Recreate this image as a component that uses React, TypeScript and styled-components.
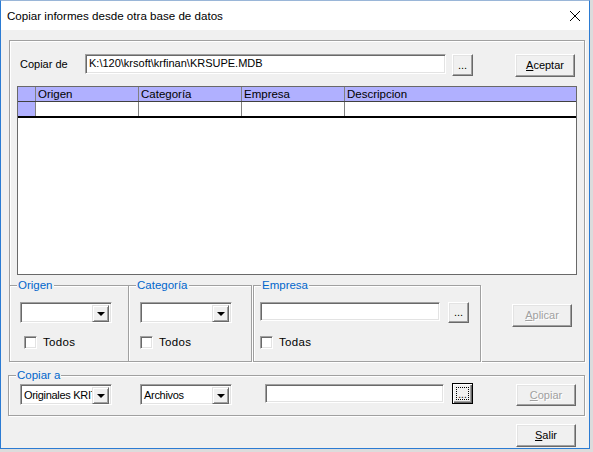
import React from "react";
import styled, { createGlobalStyle, css } from "styled-components";

const Global = createGlobalStyle`
  html, body { margin: 0; padding: 0; background: #dcdcdc; }
  body { font-family: "Liberation Sans", Arial, sans-serif; font-size: 11px; color: #000; }
  * { box-sizing: border-box; }
`;

const Window = styled.div`
  width: 590px;
  height: 449px;
  border: 1px solid #2b7bd3;
  border-top-color: #9ab6d8;
  background: #f0f0f0;
  display: flex;
  flex-direction: column;
  overflow: hidden;
`;

const TitleBar = styled.div`
  height: 29px;
  flex: none;
  background: #fff;
  display: flex;
  align-items: center;
  padding: 0 8px 0 6px;
`;

const Title = styled.div`
  flex: 1;
  font-size: 11.6px;
  color: #000;
  padding-bottom: 1px;
`;

const Client = styled.div`
  flex: 1;
  display: flex;
  flex-direction: column;
  padding: 10px 4px 0 8px;
`;

const etched = css`
  border: 1px solid #a0a0a0;
  box-shadow: inset 1px 1px 0 #fff, 1px 1px 0 #fff;
`;

const OuterFrame = styled.div`
  ${etched};
  width: 576px;
  height: 322px;
  display: flex;
  flex-direction: column;
`;

const TopRow = styled.div`
  margin-top: 13px;
  padding: 0 9px 0 10px;
  height: 23px;
  display: flex;
  align-items: flex-start;
`;

const FieldLabel = styled.div`
  width: 65px;
  line-height: 20px;
  white-space: nowrap;
`;

const sunken = css`
  border: 1px solid;
  border-color: #a0a0a0 #fff #fff #a0a0a0;
  box-shadow: inset 1px 1px 0 #696969, inset -1px -1px 0 #e3e3e3;
  background: #fff;
`;

const TextBox = styled.div<{ $w: number; $h?: number; $ml?: number }>`
  ${sunken};
  width: ${(p) => p.$w}px;
  height: ${(p) => p.$h ?? 20}px;
  margin-left: ${(p) => p.$ml ?? 0}px;
  padding: 0 3px;
  line-height: ${(p) => (p.$h ?? 20) - 3}px;
  white-space: nowrap;
  overflow: hidden;
  flex: none;
`;

const Button = styled.div<{ $w: number; $h: number; $ml?: number; $disabled?: boolean; $focused?: boolean; $mt?: number }>`
  width: ${(p) => p.$w}px;
  height: ${(p) => p.$h}px;
  margin-left: ${(p) => p.$ml ?? 0}px;
  margin-top: ${(p) => p.$mt ?? 0}px;
  flex: none;
  background: #f0f0f0;
  border: 1px solid;
  border-color: #fff #696969 #696969 #fff;
  box-shadow: inset -1px -1px 0 #a0a0a0, inset 1px 1px 0 #e3e3e3;
  display: flex;
  align-items: center;
  justify-content: center;
  font-size: 11px;
  padding-bottom: 1px;
  color: ${(p) => (p.$disabled ? "#a0a0a0" : "#000")};
  text-shadow: ${(p) => (p.$disabled ? "1px 1px 0 #fff" : "none")};
  ${(p) =>
    p.$focused &&
    css`
      border-color: #000;
      box-shadow: inset 1px 1px 0 #fff, inset -1px -1px 0 #696969, inset -2px -2px 0 #a0a0a0;
    `}
  u { text-decoration: underline; text-underline-offset: 1px; }
`;

const FocusRect = styled.span`
  width: 13px;
  height: 13px;
  border: 1px dotted #000;
  display: flex;
  align-items: flex-end;
  justify-content: center;
  font-size: 10px;
  line-height: 9px;
`;

const Spacer = styled.div`
  flex: 1;
`;

const Grid = styled.div`
  margin: 9px 0 0 7px;
  width: 560px;
  height: 189px;
  border: 1px solid #696969;
  background: #fff;
  display: flex;
  flex-direction: column;
  flex: none;
`;

const GridRow = styled.div<{ $last?: boolean }>`
  display: grid;
  grid-template-columns: 18px 103px 103px 103px 1fr;
  height: ${(p) => (p.$last ? 16 : 15)}px;
  border-bottom: ${(p) => (p.$last ? "2px solid #000" : "1px solid #404040")};
`;

const Cell = styled.div<{ $head?: boolean; $fixed?: boolean; $noRight?: boolean }>`
  background: ${(p) => (p.$head || p.$fixed ? "#b0b0ff" : "#fff")};
  border-right: ${(p) => (p.$noRight ? "none" : "1px solid #808080")};
  padding-left: 2px;
  line-height: 14px;
  font-size: 11.5px;
  white-space: nowrap;
  overflow: hidden;
`;

const FilterRow = styled.div`
  display: flex;
  margin: 10px -1px -1px -1px;
  height: 77px;
`;

const Group = styled.div<{ $w: number; $ml?: number; $pl: number; $pt: number }>`
  ${etched};
  position: relative;
  width: ${(p) => p.$w}px;
  margin-left: ${(p) => p.$ml ?? 0}px;
  padding: ${(p) => p.$pt}px 0 0 ${(p) => p.$pl}px;
  flex: none;
  display: flex;
  flex-direction: column;
`;

const GroupLabel = styled.div`
  position: absolute;
  top: -8px;
  left: 7px;
  padding: 0 1px;
  background: #f0f0f0;
  color: #0066cc;
  font-size: 11.5px;
  line-height: 14px;
`;

const Row = styled.div`
  display: flex;
  align-items: flex-start;
`;

const Combo = styled.div<{ $w: number; $ml?: number }>`
  ${sunken};
  width: ${(p) => p.$w}px;
  height: 21px;
  margin-left: ${(p) => p.$ml ?? 0}px;
  flex: none;
  display: flex;
  padding: 2px;
`;

const ComboText = styled.div`
  flex: 1;
  min-width: 0;
  overflow: hidden;
  white-space: nowrap;
  padding-left: 1px;
  line-height: 16px;
  font-size: 11px;
  letter-spacing: -0.3px;
`;

const DropButton = styled.div`
  width: 17px;
  height: 17px;
  flex: none;
  background: #f0f0f0;
  border: 1px solid;
  border-color: #e3e3e3 #696969 #696969 #e3e3e3;
  box-shadow: inset 1px 1px 0 #fff, inset -1px -1px 0 #a0a0a0;
  display: flex;
  align-items: center;
  justify-content: center;
`;

const Triangle = styled.span`
  width: 0;
  height: 0;
  border-left: 4px solid transparent;
  border-right: 4px solid transparent;
  border-top: 4px solid #000;
  margin-top: 1px;
`;

const CheckRow = styled.div<{ $mt: number; $ml: number }>`
  display: flex;
  align-items: center;
  margin-top: ${(p) => p.$mt}px;
  margin-left: ${(p) => p.$ml}px;
  height: 13px;
`;

const CheckBox = styled.div`
  width: 13px;
  height: 13px;
  flex: none;
  ${sunken};
`;

const CheckText = styled.span`
  margin-left: 6px;
  line-height: 13px;
  font-size: 11.5px;
  letter-spacing: 0.3px;
`;

const ApplyArea = styled.div`
  flex: 1;
  padding: 19px 0 0 31px;
`;

const CopyGroup = styled.div`
  ${etched};
  position: relative;
  margin: 13px 0 0 -1px;
  width: 577px;
  height: 41px;
  padding: 8px 0 0 11px;
  display: flex;
  align-items: flex-start;
  flex: none;
`;

const BottomRow = styled.div`
  display: flex;
  justify-content: flex-end;
  margin-top: 8px;
  padding-right: 9px;
`;

const CloseIcon = () => (
  <svg width="12" height="12" viewBox="0 0 12 12">
    <path d="M1 1 L11 11 M11 1 L1 11" stroke="#000" strokeWidth="1" fill="none" />
  </svg>
);

const ComboBox = ({ w, text, ml }: { w: number; text?: string; ml?: number }) => (
  <Combo $w={w} $ml={ml}>
    <ComboText>{text ?? ""}</ComboText>
    <DropButton>
      <Triangle />
    </DropButton>
  </Combo>
);

export default function App() {
  const columns = ["Origen", "Categoría", "Empresa", "Descripcion"];
  return (
    <>
      <Global />
      <Window>
        <TitleBar>
          <Title>Copiar informes desde otra base de datos</Title>
          <CloseIcon />
        </TitleBar>
        <Client>
          <OuterFrame>
            <TopRow>
              <FieldLabel>Copiar de</FieldLabel>
              <TextBox $w={361} $h={20}>K:\120\krsoft\krfinan\KRSUPE.MDB</TextBox>
              <Button $w={21} $h={22} $ml={6}>...</Button>
              <Spacer />
              <Button $w={60} $h={23}>
                <span><u>A</u>ceptar</span>
              </Button>
            </TopRow>
            <Grid>
              <GridRow>
                <Cell $fixed />
                {columns.map((c, i) => (
                  <Cell key={c} $head $noRight={i === columns.length - 1}>
                    {c}
                  </Cell>
                ))}
              </GridRow>
              <GridRow $last>
                <Cell $fixed />
                <Cell />
                <Cell />
                <Cell />
                <Cell $noRight />
              </GridRow>
            </Grid>
            <FilterRow>
              <Group $w={120} $pl={10} $pt={16}>
                <GroupLabel>Origen</GroupLabel>
                <ComboBox w={92} />
                <CheckRow $mt={13} $ml={4}>
                  <CheckBox />
                  <CheckText>Todos</CheckText>
                </CheckRow>
              </Group>
              <Group $w={124} $ml={-1} $pl={11} $pt={16}>
                <GroupLabel>Categoría</GroupLabel>
                <ComboBox w={92} />
                <CheckRow $mt={13} $ml={0}>
                  <CheckBox />
                  <CheckText>Todos</CheckText>
                </CheckRow>
              </Group>
              <Group $w={228} $ml={1} $pl={6} $pt={16}>
                <GroupLabel>Empresa</GroupLabel>
                <Row>
                  <TextBox $w={180} $h={19} />
                  <Button $w={21} $h={21} $ml={8}>...</Button>
                </Row>
                <CheckRow $mt={13} $ml={0}>
                  <CheckBox />
                  <CheckText>Todas</CheckText>
                </CheckRow>
              </Group>
              <ApplyArea>
                <Button $w={60} $h={23} $disabled>
                  <span><u>A</u>plicar</span>
                </Button>
              </ApplyArea>
            </FilterRow>
          </OuterFrame>
          <CopyGroup>
            <GroupLabel>Copiar a</GroupLabel>
            <ComboBox w={92} text="Originales KRITERIA" />
            <ComboBox w={92} ml={28} text="Archivos" />
            <TextBox $w={179} $h={19} $ml={33} />
            <Button $w={21} $h={21} $ml={8} $mt={-1} $focused>
              <FocusRect>...</FocusRect>
            </Button>
            <Button $w={60} $h={22} $ml={43} $disabled>
              <span><u>C</u>opiar</span>
            </Button>
          </CopyGroup>
          <BottomRow>
            <Button $w={60} $h={23}>
              <span><u>S</u>alir</span>
            </Button>
          </BottomRow>
        </Client>
      </Window>
    </>
  );
}
